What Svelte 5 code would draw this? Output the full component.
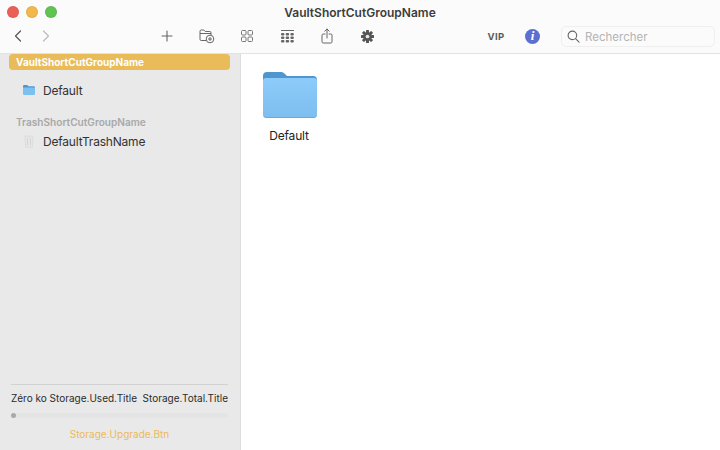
<script>
  // Toolbar buttons left of the VIP badge, in display order.
  const tools = ['add', 'newFolder', 'grid', 'denseGrid', 'share', 'gear']
</script>

<div class="window">
  <header class="header">
    <div class="titlebar">
      <div class="lights">
        <span class="light light--close"></span>
        <span class="light light--min"></span>
        <span class="light light--max"></span>
      </div>
      <div class="title">VaultShortCutGroupName</div>
    </div>
    <div class="toolbar">
      <button class="nav">
        <svg width="10" height="14" viewBox="0 0 10 14"><path d="M7.500 2 2.500 7l5 5" fill="none" stroke="#555" stroke-width="1.200" stroke-linecap="round" stroke-linejoin="round"/></svg>
      </button>
      <button class="nav">
        <svg width="10" height="14" viewBox="0 0 10 14"><path d="M2.500 2l5 5-5 5" fill="none" stroke="#bbb" stroke-width="1.200" stroke-linecap="round" stroke-linejoin="round"/></svg>
      </button>
      <div class="tools">
        {#each tools as tool}
          <button class="tool">
            {#if tool === 'add'}
              <svg width="12" height="12" viewBox="0 0 12 12"><path d="M6 1v10M1 6h10" stroke="#666" stroke-width="1.100" stroke-linecap="round"/></svg>
            {:else if tool === 'newFolder'}
              <svg width="16" height="15" viewBox="0 0 16 15" fill="none" stroke="#666" stroke-width="1">
                <path d="M7.500 11.500H2.200A1.200 1.200 0 0 1 1 10.300V2.200A1.200 1.200 0 0 1 2.200 1h2.600l1.500 1.500h4.500A1.200 1.200 0 0 1 12 3.700v2.300"/>
                <path d="M1 4.500h11"/>
                <circle cx="11" cy="10" r="3.800" fill="#fbfbfb"/>
                <path d="M11 8v4M9 10h4"/>
              </svg>
            {:else if tool === 'grid'}
              <svg width="12" height="12" viewBox="0 0 12 12" fill="none" stroke="#777" stroke-width="1">
                <rect x=".5" y=".5" width="4.500" height="4.500" rx="1"/>
                <rect x="7" y=".5" width="4.500" height="4.500" rx="1"/>
                <rect x=".5" y="7" width="4.500" height="4.500" rx="1"/>
                <rect x="7" y="7" width="4.500" height="4.500" rx="1"/>
              </svg>
            {:else if tool === 'denseGrid'}
              <svg width="13" height="13" viewBox="0 0 13 13" fill="#666">
                <rect x="0" y="0" width="13" height="1"/>
                {#each [3, 6.500, 10] as y}
                  {#each [0, 4.700, 9.400] as x}
                    <rect {x} {y} width="3.400" height="2.600" rx="1"/>
                  {/each}
                {/each}
              </svg>
            {:else if tool === 'share'}
              <svg width="12" height="16" viewBox="0 0 12 16" fill="none" stroke="#666" stroke-width="1" stroke-linecap="round" stroke-linejoin="round">
                <path d="M4 6H2.200A1.200 1.200 0 0 0 1 7.200v6.600A1.200 1.200 0 0 0 2.200 15h7.600a1.200 1.200 0 0 0 1.200-1.200V7.200A1.200 1.200 0 0 0 9.800 6H8"/>
                <path d="M6 10V1M3.800 3.200 6 1l2.200 2.200"/>
              </svg>
            {:else}
              <svg width="13" height="13" viewBox="0 0 14 14">
                <g fill="#555">
                  {#each [0, 45, 90, 135] as a}
                    <rect x="5.400" y="0" width="3.200" height="14" rx=".6" transform="rotate({a} 7 7)"/>
                  {/each}
                  <circle cx="7" cy="7" r="4.700"/>
                </g>
                <circle cx="7" cy="7" r="2" fill="#e6e6e6"/>
              </svg>
            {/if}
          </button>
        {/each}
      </div>
      <span class="vip">VIP</span>
      <span class="info">i</span>
      <label class="search">
        <svg width="13" height="13" viewBox="0 0 14 14" fill="none" stroke="#666" stroke-width="1.200" stroke-linecap="round"><circle cx="5.800" cy="5.800" r="4.600"/><path d="m9.200 9.200 3.800 3.800"/></svg>
        <span>Rechercher</span>
      </label>
    </div>
  </header>

  <div class="body">
    <aside class="sidebar">
      <div class="group-active">VaultShortCutGroupName</div>
      <div class="row row--vault">
        <svg width="12" height="10" viewBox="0 0 12 10">
          <path d="M0 1.200A1.200 1.200 0 0 1 1.200 0h3l1.200 1.200h5.400A1.200 1.200 0 0 1 12 2.400V3H0z" fill="#4d97d1"/>
          <path d="M0 2.500h12v6.300A1.200 1.200 0 0 1 10.800 10H1.200A1.200 1.200 0 0 1 0 8.800z" fill="#7cc0f2"/>
        </svg>
        <span>Default</span>
      </div>
      <div class="group">TrashShortCutGroupName</div>
      <div class="row row--trash">
        <svg width="12" height="13" viewBox="0 0 12 13" fill="none">
          <path d="M2 1h8l-.6 11.200H2.600z" fill="#e6e6e6" stroke="#dadada" stroke-width=".8"/>
          <path d="M4.500 3.500v6.500M7.500 3.500v6.500" stroke="#d2d2d2" stroke-width=".8"/>
        </svg>
        <span>DefaultTrashName</span>
      </div>
      <div class="storage">
        <div class="storage__labels">
          <span>Zéro ko Storage.Used.Title</span>
          <span>Storage.Total.Title</span>
        </div>
        <div class="storage__track"><div class="storage__fill"></div></div>
        <div class="storage__upgrade">Storage.Upgrade.Btn</div>
      </div>
    </aside>

    <main class="content">
      <div class="item">
        <svg width="56" height="48" viewBox="0 0 56 48">
          <defs>
            <linearGradient id="folder-front" x1="0" y1="0" x2="0" y2="1">
              <stop offset="0" stop-color="#8ccbfa"/>
              <stop offset="1" stop-color="#7dbef0"/>
            </linearGradient>
          </defs>
          <path d="M1 5a4 4 0 0 1 4-4h13.500c2 0 3 .6 4.200 1.800L25 5h26a4 4 0 0 1 4 4v12H1z" fill="#4f96cf"/>
          <path d="M1 10a3 3 0 0 1 3-3h48a3 3 0 0 1 3 3v33a4 4 0 0 1-4 4H5a4 4 0 0 1-4-4z" fill="url(#folder-front)"/>
          <path d="M1 43a4 4 0 0 0 4 4h46a4 4 0 0 0 4-4v-.8a4 4 0 0 1-4 4H5a4 4 0 0 1-4-4z" fill="#6aa5cf"/>
        </svg>
        <span class="item__label">Default</span>
      </div>
    </main>
  </div>
</div>

<style>
  :global(body) {
    margin: 0;
    background: #fff;
  }

  .window {
    display: flex;
    flex-direction: column;
    width: 720px;
    height: 450px;
    overflow: hidden;
    font-family: Inter, "Liberation Sans", sans-serif;
    color: #2a2a2a;
  }

  .header {
    flex: none;
    height: 54px;
    box-sizing: border-box;
    background: #fbfbfb;
    border-bottom: 1px solid #e2e2e2;
  }

  .titlebar {
    display: grid;
    grid-template-columns: 1fr auto 1fr;
    align-items: center;
    height: 24px;
  }

  .lights {
    display: flex;
    gap: 7px;
    padding-left: 7px;
  }

  .light {
    width: 10px;
    height: 10px;
    border-radius: 50%;
    border: 0.5px solid rgba(0, 0, 0, 0.06);
  }

  .light--close { background: #ec5f57; }
  .light--min { background: #f2b84c; }
  .light--max { background: #62c354; }

  .title {
    font-size: 12px;
    font-weight: 600;
    color: #3d3d3d;
  }

  .toolbar {
    display: flex;
    align-items: center;
    height: 24px;
    padding: 0 5px 0 4px;
  }

  button {
    display: flex;
    align-items: center;
    justify-content: center;
    padding: 0;
    border: 0;
    background: none;
  }

  .nav {
    width: 28px;
    height: 24px;
  }

  .tools {
    display: flex;
    margin-left: 87px;
  }

  .tool {
    width: 40px;
    height: 24px;
  }

  .vip {
    width: 32px;
    margin-left: 93px;
    text-align: center;
    font-size: 9.500px;
    font-weight: 700;
    letter-spacing: 0.3px;
    color: #5a5a5a;
  }

  .info {
    display: flex;
    align-items: center;
    justify-content: center;
    width: 15px;
    height: 15px;
    margin-left: 13px;
    border-radius: 50%;
    background: #5a6fd0;
    color: #fff;
    font-family: "Liberation Serif", serif;
    font-size: 13px;
    font-weight: 700;
    font-style: italic;
  }

  .search {
    display: flex;
    align-items: center;
    gap: 5px;
    width: 154px;
    height: 21px;
    box-sizing: border-box;
    margin: 1px 0 0 21px;
    padding-left: 5px;
    border: 1px solid #efefef;
    border-radius: 5px;
    font-size: 11.500px;
    color: #b4b4b4;
  }

  .body {
    flex: 1;
    display: flex;
    min-height: 0;
  }

  .sidebar {
    flex: none;
    display: flex;
    flex-direction: column;
    width: 241px;
    box-sizing: border-box;
    padding: 0 10px 0 9px;
    background: #e9e9e9;
    border-right: 1px solid #dcdcdc;
  }

  .group-active {
    height: 16px;
    padding-left: 7px;
    border-radius: 4px;
    background: #e9bb59;
    color: #fff;
    font-size: 10px;
    font-weight: 700;
    line-height: 17px;
    white-space: nowrap;
  }

  .row {
    display: flex;
    align-items: center;
    gap: 8px;
    height: 20px;
    padding-left: 14px;
    font-size: 12px;
    letter-spacing: -0.2px;
    color: #333;
  }

  .row--vault {
    margin-top: 10px;
  }

  .row--trash {
    margin-top: 2px;
  }

  .group {
    margin-top: 16px;
    padding-left: 7px;
    font-size: 10.100px;
    font-weight: 600;
    line-height: 13px;
    color: #a8a8a8;
    white-space: nowrap;
  }

  .storage {
    margin: auto 2px 0 2px;
    padding-bottom: 9px;
  }

  .storage__labels {
    display: flex;
    justify-content: space-between;
    padding-top: 6px;
    border-top: 1px solid #d2d2d2;
    font-size: 10px;
    line-height: 14px;
    color: #2c2c2c;
    white-space: nowrap;
  }

  .storage__track {
    height: 5px;
    margin-top: 8px;
    border-radius: 3px;
    background: #e4e4e4;
  }

  .storage__fill {
    width: 5px;
    height: 5px;
    border-radius: 50%;
    background: #a9a9a9;
  }

  .storage__upgrade {
    margin-top: 9px;
    text-align: center;
    font-size: 10px;
    line-height: 14px;
    color: #ebb95a;
  }

  .content {
    flex: 1;
    padding: 17px 0 0 21px;
    background: #fff;
  }

  .item {
    display: flex;
    flex-direction: column;
    align-items: center;
    gap: 9px;
    width: 56px;
    font-size: 12px;
    letter-spacing: -0.2px;
    color: #222;
  }

  .item svg {
    display: block;
    flex: none;
  }

  .item__label {
    margin-right: 2px;
  }
</style>
